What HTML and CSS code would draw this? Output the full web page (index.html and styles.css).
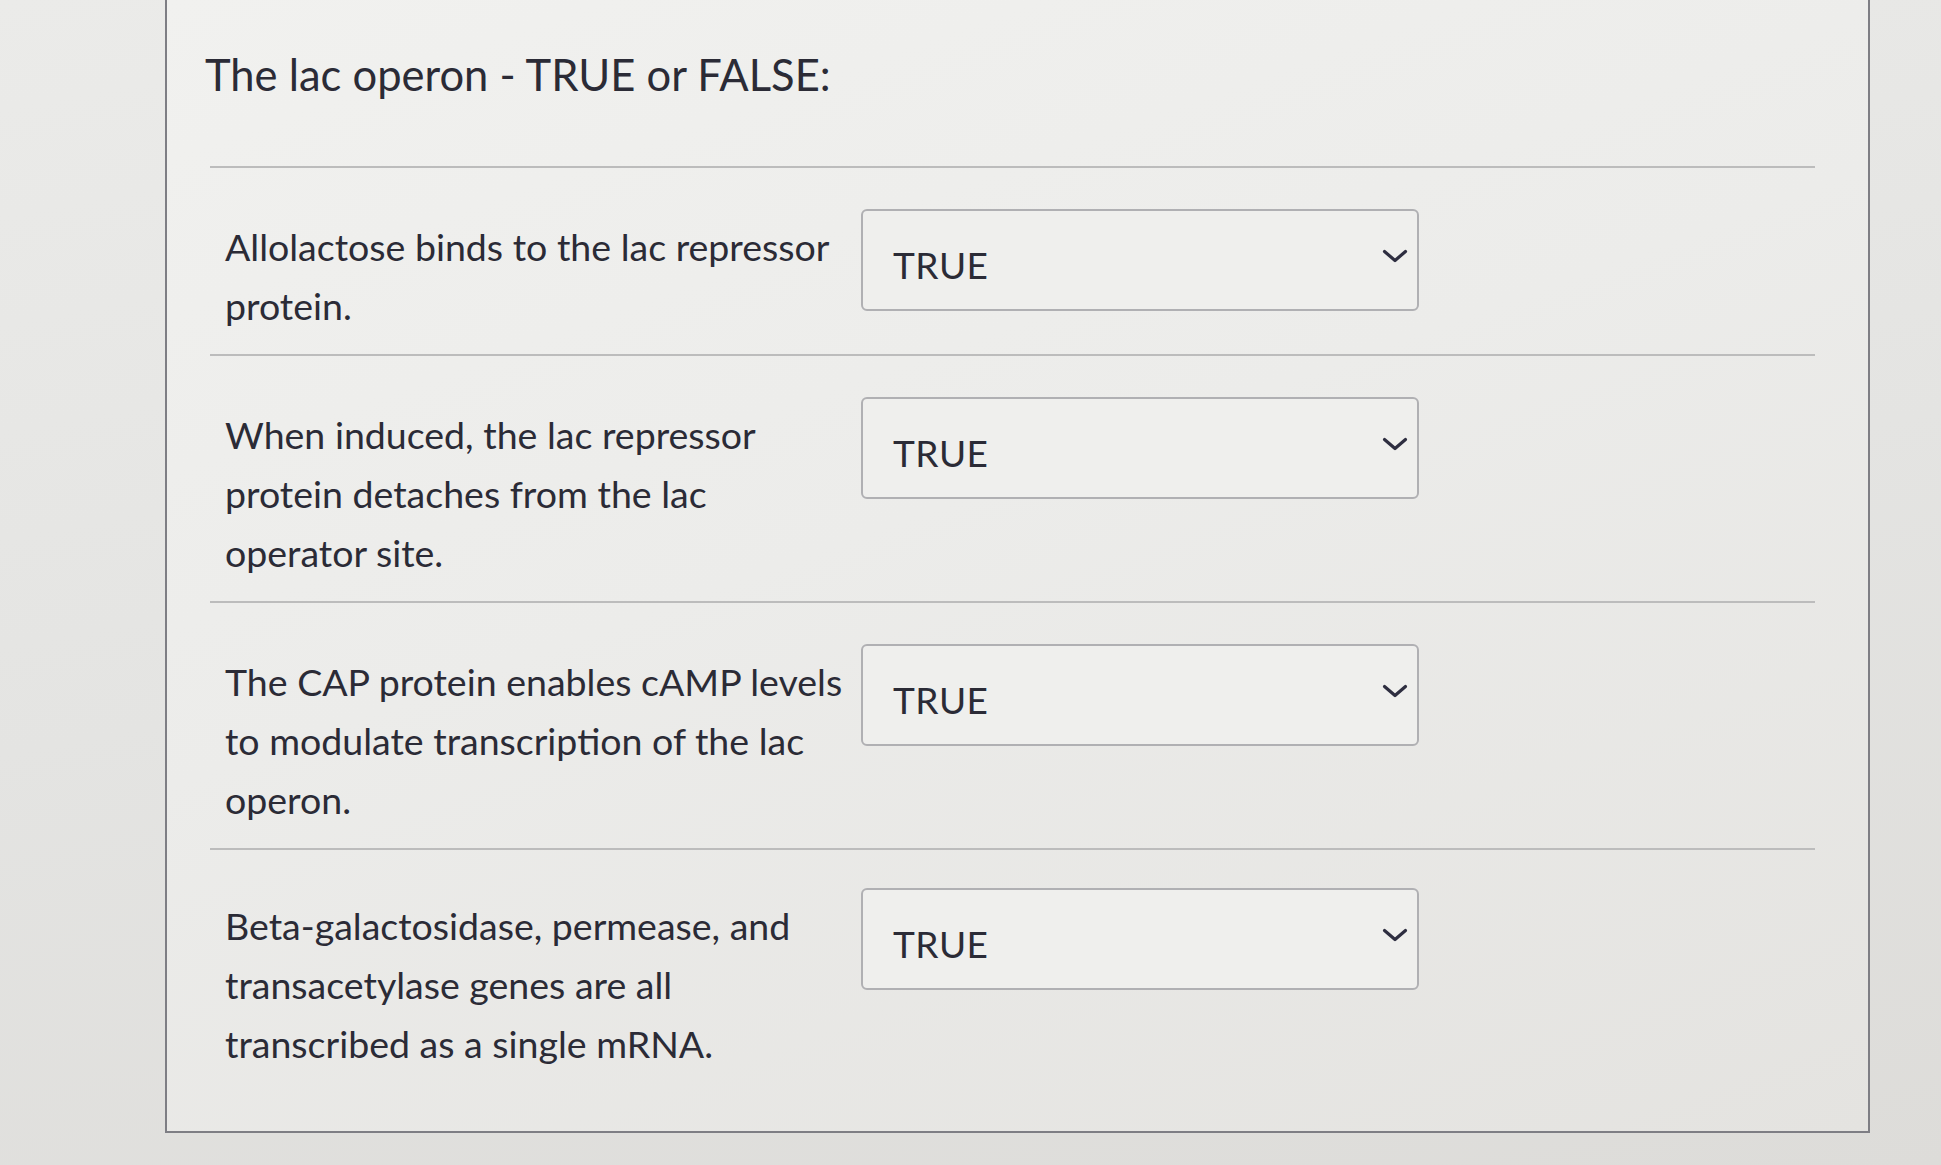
FILE: index.html
```html
<!DOCTYPE html>
<html lang="en">
<head>
<meta charset="utf-8">
<title>The lac operon - TRUE or FALSE</title>
<link rel="stylesheet" href="styles.css">
</head>
<body>
<div class="page">
  <div class="card">
    <h1 class="title">The lac operon - TRUE or FALSE:</h1>
    <div class="questions">
      <div class="q">
        <p class="q-text">Allolactose binds to the lac repressor protein.</p>
        <div class="select"><span class="select-value">TRUE</span><svg class="chev" viewBox="0 0 26 14" width="26" height="14"><path d="M2.5 2.5 L13 11.5 L23.5 2.5" fill="none" stroke="#2e2e40" stroke-width="3.2" stroke-linecap="round" stroke-linejoin="round"/></svg></div>
      </div>
      <div class="q">
        <p class="q-text">When induced, the lac repressor protein detaches from the lac operator site.</p>
        <div class="select"><span class="select-value">TRUE</span><svg class="chev" viewBox="0 0 26 14" width="26" height="14"><path d="M2.5 2.5 L13 11.5 L23.5 2.5" fill="none" stroke="#2e2e40" stroke-width="3.2" stroke-linecap="round" stroke-linejoin="round"/></svg></div>
      </div>
      <div class="q">
        <p class="q-text">The CAP protein enables cAMP levels to modulate transcription of the lac operon.</p>
        <div class="select"><span class="select-value">TRUE</span><svg class="chev" viewBox="0 0 26 14" width="26" height="14"><path d="M2.5 2.5 L13 11.5 L23.5 2.5" fill="none" stroke="#2e2e40" stroke-width="3.2" stroke-linecap="round" stroke-linejoin="round"/></svg></div>
      </div>
      <div class="q q-last">
        <p class="q-text">Beta-galactosidase, permease, and transacetylase genes are all transcribed as a single mRNA.</p>
        <div class="select"><span class="select-value">TRUE</span><svg class="chev" viewBox="0 0 26 14" width="26" height="14"><path d="M2.5 2.5 L13 11.5 L23.5 2.5" fill="none" stroke="#2e2e40" stroke-width="3.2" stroke-linecap="round" stroke-linejoin="round"/></svg></div>
      </div>
    </div>
  </div>
</div>
</body>
</html>
```

FILE: styles.css
```css
html, body {
  margin: 0;
  padding: 0;
}

body {
  width: 1941px;
  height: 1165px;
  overflow: hidden;
  background: linear-gradient(170deg, #ebebe9 0%, #e4e4e2 50%, #dddcd9 100%);
  font-family: Lato, "Open Sans", "Liberation Sans", sans-serif;
  color: #2b2b36;
}

.page {
  padding-left: 165px;
}

.card {
  box-sizing: border-box;
  width: 1705px;
  border: 2px solid #7e7e84;
  border-top: none;
  padding: 48px 53px 0 38px;
  background: linear-gradient(160deg, #f1f1ef 0%, #ececea 45%, #e4e3e0 100%);
}

.title {
  margin: 0;
  font-size: 43.5px;
  line-height: 52px;
  font-weight: 400;
  color: #2b2b36;
}

.questions {
  margin-top: 66px;
  margin-left: 5px;
}

.q {
  display: flex;
  align-items: flex-start;
  gap: 4px;
  border-top: 2px solid #bcbcbc;
  padding: 41px 0 19px 15px;
}

.q-last {
  padding-top: 38px;
  padding-bottom: 58px;
}

.q-text {
  width: 632px;
  margin: 8px 0 0 0;
  font-size: 37.5px;
  line-height: 59px;
}

.select {
  box-sizing: border-box;
  width: 558px;
  height: 102px;
  border: 2px solid #b0b0b3;
  border-radius: 6px;
  display: flex;
  align-items: center;
  justify-content: space-between;
  padding: 8px 9px 0 30px;
  background: #efefed;
}

.select-value {
  font-size: 37px;
  letter-spacing: 0.5px;
}

.chev {
  margin-top: -16px;
}
```
